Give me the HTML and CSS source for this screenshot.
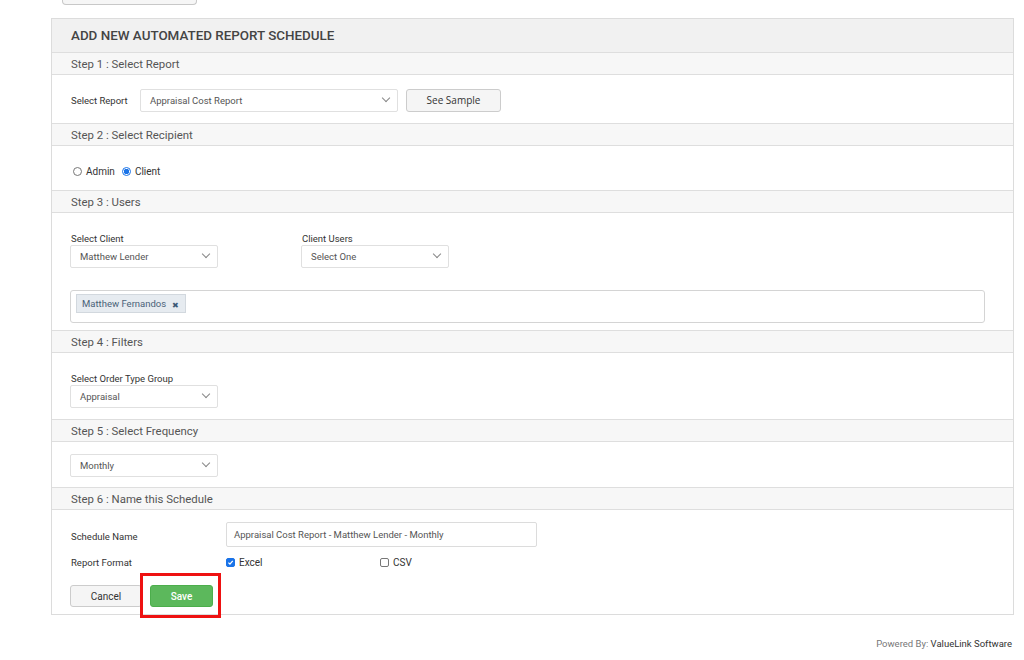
FILE: index.html
```html
<!DOCTYPE html>
<html lang="en">
<head>
  <meta charset="UTF-8" />
  <meta name="viewport" content="width=device-width, initial-scale=1.0" />
  <title>Add New Automated Report Schedule</title>
  <link rel="stylesheet" href="styles.css">
</head>
<body>

  <div class="top-strip">
    <div class="top-btn"></div>
  </div>

  <div class="panel">
    <div class="panel-title">ADD NEW AUTOMATED REPORT SCHEDULE</div>

    <div class="step-head">Step 1 : Select Report</div>
    <div class="step-body step-1">
      <span class="label">Select Report</span>
      <div class="select select-wide">Appraisal Cost Report</div>
      <button class="btn btn-default btn-sample">See Sample</button>
    </div>

    <div class="step-head">Step 2 : Select Recipient</div>
    <div class="step-body step-2">
      <label class="radio"><span class="radio-dot"></span>Admin</label>
      <label class="radio"><span class="radio-dot checked"></span>Client</label>
    </div>

    <div class="step-head">Step 3 : Users</div>
    <div class="step-body step-3">
      <div class="field-row">
        <div class="field">
          <span class="label">Select Client</span>
          <div class="select">Matthew Lender</div>
        </div>
        <div class="field">
          <span class="label">Client Users</span>
          <div class="select">Select One</div>
        </div>
      </div>
      <div class="tag-box">
        <span class="tag">Matthew Fernandos <span class="tag-x">&#x2716;</span></span>
      </div>
    </div>

    <div class="step-head">Step 4 : Filters</div>
    <div class="step-body step-4">
      <div class="field">
        <span class="label">Select Order Type Group</span>
        <div class="select">Appraisal</div>
      </div>
    </div>

    <div class="step-head">Step 5 : Select Frequency</div>
    <div class="step-body step-5">
      <div class="select">Monthly</div>
    </div>

    <div class="step-head">Step 6 : Name this Schedule</div>
    <div class="step-body step-6">
      <div class="form-line name-line">
        <span class="label form-label">Schedule Name</span>
        <div class="text-input">Appraisal Cost Report - Matthew Lender - Monthly</div>
      </div>
      <div class="form-line format-line">
        <span class="label form-label">Report Format</span>
        <label class="check check-excel"><span class="box checked">
          <svg viewBox="0 0 10 10" width="9" height="9"><path d="M2 5.2 L4.2 7.4 L8.2 2.6" fill="none" stroke="#fff" stroke-width="1.8"/></svg>
        </span>Excel</label>
        <label class="check"><span class="box"></span>CSV</label>
      </div>
      <div class="actions">
        <button class="btn btn-default btn-cancel">Cancel</button>
        <div class="highlight">
          <button class="btn btn-success">Save</button>
        </div>
      </div>
    </div>
  </div>

  <div class="footer">Powered By: <strong>ValueLink Software</strong></div>

</body>
</html>
```

FILE: styles.css
```css
*, *::before, *::after {
  margin: 0;
  padding: 0;
  box-sizing: border-box;
}

body {
  font-family: Roboto, 'Liberation Sans', sans-serif;
  background: #ffffff;
  color: #333;
  font-size: 10px;
  width: 1024px;
  height: 660px;
  overflow: hidden;
}

.top-strip {
  height: 18px;
  padding-left: 62px;
}

.top-btn {
  width: 135px;
  height: 5px;
  border: 1px solid #c8c8c8;
  border-top: none;
  border-radius: 0 0 4px 4px;
  background: #f6f6f6;
}

.panel {
  margin-left: 51px;
  width: 963px;
  border: 1px solid #dcdcdc;
  border-top: none;
  background: #fff;
}

.panel-title {
  height: 34px;
  line-height: 33px;
  padding-left: 19px;
  background: #f1f1f1;
  border-top: 1px solid #dcdcdc;
  font-size: 13.4px;
  font-weight: 500;
  color: #444;
}

.step-head {
  height: 23px;
  line-height: 22px;
  padding-left: 19px;
  background: #f7f7f7;
  border-top: 1px solid #dedede;
  border-bottom: 1px solid #dedede;
  font-size: 11.4px;
  color: #555;
}

.step-body {
  padding-left: 18px;
}

.label {
  font-size: 9.5px;
  color: #333;
}

.select {
  position: relative;
  width: 148px;
  height: 23px;
  line-height: 21px;
  padding-left: 9px;
  border: 1px solid #e0e0e0;
  border-radius: 2px;
  font-size: 9.5px;
  color: #555;
  background: #fff;
}

.select::after {
  content: '';
  position: absolute;
  right: 8px;
  top: 5px;
  width: 6px;
  height: 6px;
  border-right: 1.2px solid #888;
  border-bottom: 1.2px solid #888;
  transform: rotate(45deg);
}

.select-wide {
  width: 258px;
}

.btn {
  font-family: 'Open Sans', sans-serif;
  font-size: 10px;
  border-radius: 3px;
  cursor: pointer;
}

.btn-default {
  background: #f5f5f5;
  border: 1px solid #ccc;
  color: #333;
}

.btn-success {
  width: 63px;
  height: 22px;
  background: #5cb85c;
  border: 1px solid #4cae4c;
  color: #fff;
  font-family: Roboto, sans-serif;
  font-weight: 500;
}

/* step 1 */
.step-1 {
  height: 48px;
  display: flex;
  align-items: center;
  padding-top: 2px;
}

.step-1 .label {
  width: 70px;
  padding-left: 1px;
}

.btn-sample {
  width: 95px;
  height: 23px;
  margin-left: 8px;
}

/* step 2 */
.step-2 {
  height: 44px;
  display: flex;
  align-items: center;
  gap: 7px;
  padding-left: 21px;
  padding-top: 7px;
}

.radio {
  display: flex;
  align-items: center;
  gap: 4px;
  font-size: 10px;
  color: #333;
}

.radio-dot {
  width: 9px;
  height: 9px;
  border-radius: 50%;
  border: 1px solid #777;
  background: #fff;
}

.radio-dot.checked {
  border: 1px solid #1a73e8;
  background: radial-gradient(circle, #1a73e8 0 2.5px, #fff 3px);
}

/* step 3 */
.step-3 {
  height: 117px;
  padding-top: 20px;
  padding-right: 28px;
}

.field-row {
  display: flex;
  gap: 83px;
}

.field {
  display: flex;
  flex-direction: column;
  gap: 1px;
}

.field .label {
  padding-left: 1px;
}

.tag-box {
  margin-top: 22px;
  height: 33px;
  border: 1px solid #d4d4d4;
  border-radius: 3px;
  padding: 3px 5px;
}

.tag {
  display: inline-flex;
  align-items: center;
  gap: 6px;
  height: 19px;
  padding: 0 6px 0 5px;
  background: #e6ebf0;
  border: 1px solid #d2d8de;
  font-size: 9.5px;
  color: #4a6278;
}

.tag-x {
  font-size: 8px;
  color: #3c5a76;
  margin-top: 4px;
}

/* step 4 */
.step-4 {
  height: 66px;
  padding-top: 20px;
}

/* step 5 */
.step-5 {
  height: 45px;
  padding-top: 12px;
}

/* step 6 */
.step-6 {
  height: 104px;
  padding-top: 12px;
}

.form-line {
  display: flex;
  align-items: center;
}

.form-label {
  width: 156px;
  padding-left: 1px;
}

.name-line {
  height: 25px;
}

.name-line .form-label {
  padding-top: 4px;
}

.text-input {
  width: 311px;
  height: 25px;
  line-height: 23px;
  padding-left: 7px;
  border: 1px solid #dcdcdc;
  border-radius: 2px;
  font-size: 9.5px;
  color: #555;
}

.format-line {
  height: 28px;
  padding-top: 3px;
}

.check {
  display: flex;
  align-items: center;
  gap: 4px;
  font-size: 10px;
  color: #333;
  width: 154px;
}

.box {
  width: 9px;
  height: 9px;
  border: 1px solid #777;
  border-radius: 2px;
  background: #fff;
  display: flex;
  align-items: center;
  justify-content: center;
}

.box.checked {
  background: #1a73e8;
  border-color: #1a73e8;
}

.actions {
  display: flex;
  align-items: center;
  margin-top: 10px;
}

.btn-cancel {
  width: 72px;
  height: 22px;
  font-family: Roboto, sans-serif;
}

.highlight {
  position: relative;
  display: flex;
  margin-left: 8px;
}

.highlight::before {
  content: '';
  position: absolute;
  left: -10px;
  top: -12px;
  width: 81px;
  height: 45px;
  border: 3px solid #ee1111;
  pointer-events: none;
}

.footer {
  text-align: right;
  padding-right: 12px;
  margin-top: 23px;
  font-size: 9.5px;
  color: #777;
}

.footer strong {
  font-weight: 400;
  color: #333;
}
```
